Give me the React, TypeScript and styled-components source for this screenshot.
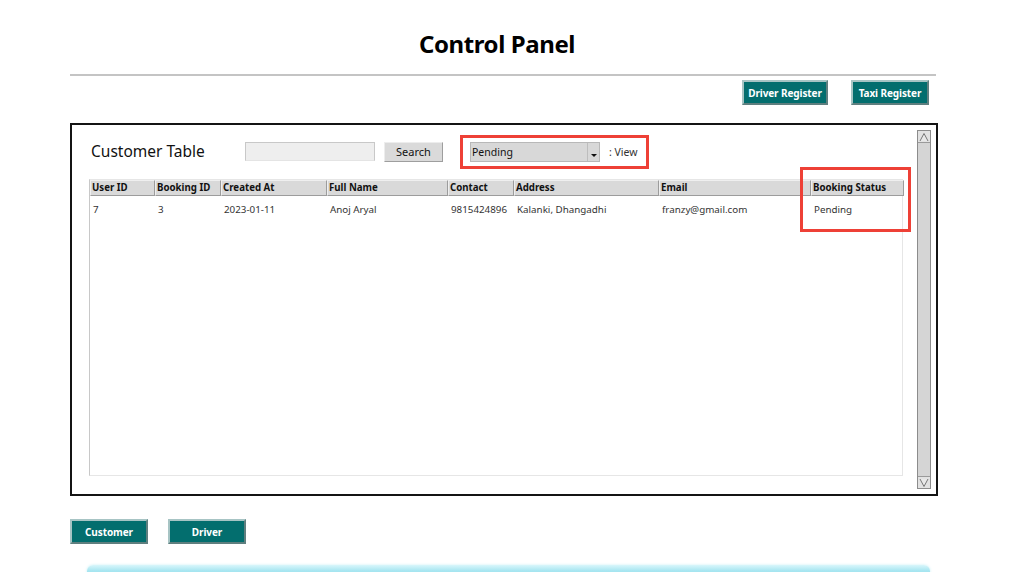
import styled, { createGlobalStyle } from "styled-components";

const GlobalStyle = createGlobalStyle`
  body {
    margin: 0;
    background: #ffffff;
    font-family: "Noto Sans", "Open Sans", sans-serif;
    overflow: hidden;
  }
`;

const columns = [
  { title: "User ID", width: 65 },
  { title: "Booking ID", width: 66 },
  { title: "Created At", width: 106 },
  { title: "Full Name", width: 121 },
  { title: "Contact", width: 66 },
  { title: "Address", width: 145 },
  { title: "Email", width: 152 },
  { title: "Booking Status", width: 93 },
];

const rows = [
  ["7", "3", "2023-01-11", "Anoj Aryal", "9815424896", "Kalanki, Dhangadhi", "franzy@gmail.com", "Pending"],
];

const gridTemplate = columns.map((c) => `${c.width}px`).join(" ");

const App = () => {
  return (
    <>
      <GlobalStyle />
      <Page>
        <Title>Control Panel</Title>
        <Divider />
        <TopActions>
          <TealButton $width={86}>Driver Register</TealButton>
          <TealButton $width={78}>Taxi Register</TealButton>
        </TopActions>

        <Panel>
          <Content>
            <Toolbar>
              <PanelTitle>Customer Table</PanelTitle>
              <SearchInput />
              <GrayButton>Search</GrayButton>
              <Highlight>
                <Combo>
                  <span>Pending</span>
                  <ComboArrow />
                </Combo>
                <ViewLabel>: View</ViewLabel>
              </Highlight>
            </Toolbar>

            <TableWrap>
              <HeaderRow>
                {columns.map((c) => (
                  <HeaderCell key={c.title}>{c.title}</HeaderCell>
                ))}
              </HeaderRow>
              {rows.map((r, i) => (
                <BodyRow key={i}>
                  {r.map((v, j) => (
                    <BodyCell key={j}>{v}</BodyCell>
                  ))}
                </BodyRow>
              ))}
              <StatusMark />
            </TableWrap>
          </Content>

          <Scrollbar>
            <ScrollArrow>
              <svg width="10" height="10" viewBox="0 0 10 10">
                <path d="M1 9 L5 1.5 L9 9" fill="#e8e8e8" stroke="#777" strokeWidth="1" />
              </svg>
            </ScrollArrow>
            <ScrollTrack />
            <ScrollArrow>
              <svg width="10" height="10" viewBox="0 0 10 10">
                <path d="M1 1 L5 8.5 L9 1" fill="#e8e8e8" stroke="#777" strokeWidth="1" />
              </svg>
            </ScrollArrow>
          </Scrollbar>
        </Panel>

        <BottomActions>
          <TealButton $width={78}>Customer</TealButton>
          <TealButton $width={78}>Driver</TealButton>
        </BottomActions>

        <GlowBar />
      </Page>
    </>
  );
};

export default App;

const Page = styled.div`
  width: 1016px;
  height: 572px;
  box-sizing: border-box;
  padding-top: 28px;
  display: flex;
  flex-direction: column;
  overflow: hidden;

  & > * {
    flex-shrink: 0;
  }
`;

const Title = styled.h1`
  margin: 0;
  padding-right: 22px;
  text-align: center;
  font-size: 24px;
  line-height: 32px;
  font-weight: 700;
  color: #000;
  letter-spacing: -0.4px;
`;

const Divider = styled.div`
  margin: 14px 80px 0 70px;
  height: 2px;
  background: #c4c4c4;
`;

const TopActions = styled.div`
  display: flex;
  justify-content: flex-end;
  gap: 23px;
  margin-top: 4px;
  padding-right: 87px;
`;

const TealButton = styled.button<{ $width: number }>`
  width: ${(p) => p.$width}px;
  height: 25px;
  padding: 0;
  box-sizing: border-box;
  background: #036e6e;
  border: 2px solid #a7c4c4;
  border-right-color: #5f7f7f;
  border-bottom-color: #5f7f7f;
  color: #ffffff;
  font-family: "Noto Sans", sans-serif;
  font-size: 10px;
  font-weight: 700;
  letter-spacing: -0.1px;
`;

const Panel = styled.div`
  margin: 18px 78px 0 70px;
  height: 373px;
  box-sizing: border-box;
  border: 2px solid #141414;
  display: flex;
`;

const Content = styled.div`
  flex: 1;
  padding: 9px 0 0 17px;
  display: flex;
  flex-direction: column;
`;

const Toolbar = styled.div`
  display: flex;
  align-items: center;
  height: 33px;
`;

const PanelTitle = styled.div`
  width: 154px;
  padding-left: 2px;
  font-size: 15.5px;
  color: #111;
`;

const SearchInput = styled.div`
  width: 130px;
  height: 19px;
  box-sizing: border-box;
  background: #eeeeee;
  border: 1px solid #c8c8c8;
  border-bottom-color: #e4e4e4;
  margin-top: 1px;
`;

const GrayButton = styled.button`
  margin-left: 9px;
  width: 59px;
  height: 20px;
  padding: 0;
  box-sizing: border-box;
  background: #dadada;
  border: 1px solid #ededed;
  border-right-color: #9e9e9e;
  border-bottom-color: #9e9e9e;
  font-family: "Noto Sans", sans-serif;
  font-size: 11px;
  color: #111;
  margin-top: 2px;
`;

const Highlight = styled.div`
  margin-left: 17px;
  width: 189px;
  height: 34px;
  box-sizing: border-box;
  border: 3px solid #ee4036;
  display: flex;
  align-items: center;
  padding-left: 7px;
  margin-top: 2px;
`;

const Combo = styled.div`
  width: 130px;
  height: 20px;
  box-sizing: border-box;
  background: #d8d8d8;
  border: 1px solid #b8b8b8;
  display: flex;
  align-items: center;
  justify-content: space-between;
  padding-left: 1px;
  font-size: 10.5px;
  color: #111;
`;

const ComboArrow = styled.div`
  width: 11px;
  height: 18px;
  border-left: 1px solid #bdbdbd;
  position: relative;
  &::after {
    content: "";
    position: absolute;
    left: 3px;
    bottom: 4px;
    border-left: 3px solid transparent;
    border-right: 3px solid transparent;
    border-top: 3px solid #111;
  }
`;

const ViewLabel = styled.div`
  margin-left: 9px;
  font-size: 10.5px;
  color: #333;
`;

const TableWrap = styled.div`
  position: relative;
  margin-top: 12px;
  width: 814px;
  height: 297px;
  box-sizing: border-box;
  border: 1px solid #e6e6e6;
  border-left-color: #c8c8c8;
`;

const HeaderRow = styled.div`
  display: grid;
  grid-template-columns: ${gridTemplate};
  height: 16px;
`;

const HeaderCell = styled.div`
  box-sizing: border-box;
  background: #d9d9d9;
  border-top: 1px solid #efefef;
  border-left: 1px solid #efefef;
  border-right: 1px solid #9c9c9c;
  border-bottom: 1px solid #9c9c9c;
  padding-left: 1px;
  font-size: 9.7px;
  font-weight: 700;
  line-height: 14px;
  color: #111;
  white-space: nowrap;
  overflow: hidden;
`;

const BodyRow = styled.div`
  display: grid;
  grid-template-columns: ${gridTemplate};
  height: 27px;
  align-items: center;
`;

const BodyCell = styled.div`
  padding-left: 3px;
  font-size: 9.8px;
  color: #333;
  white-space: nowrap;
  overflow: hidden;
`;

const StatusMark = styled.div`
  position: absolute;
  left: 710px;
  top: -13px;
  width: 111px;
  height: 65px;
  box-sizing: border-box;
  border: 3px solid #ee4036;
`;

const Scrollbar = styled.div`
  width: 12px;
  margin: 5px 5px 5px 0;
  display: flex;
  flex-direction: column;
  border: 1px solid #8c8c8c;
  background: #d6d6d6;
`;

const ScrollArrow = styled.div`
  height: 11px;
  display: flex;
  justify-content: center;
  align-items: center;
  background: #e2e2e2;
  svg {
    display: block;
  }
`;

const ScrollTrack = styled.div`
  flex: 1;
  border-top: 1px solid #9a9a9a;
  border-bottom: 1px solid #9a9a9a;
  background: #d5d5d5;
`;

const BottomActions = styled.div`
  display: flex;
  gap: 20px;
  margin: 23px 0 0 70px;
`;

const GlowBar = styled.div`
  margin: 21px 86px 0 87px;
  height: 14px;
  border-radius: 6px;
  background: linear-gradient(180deg, #d8f6fb 0%, #a9e6f1 40%, #8fdbe9 100%);
  box-shadow: 0 0 3px #c8f0f6;
`;
